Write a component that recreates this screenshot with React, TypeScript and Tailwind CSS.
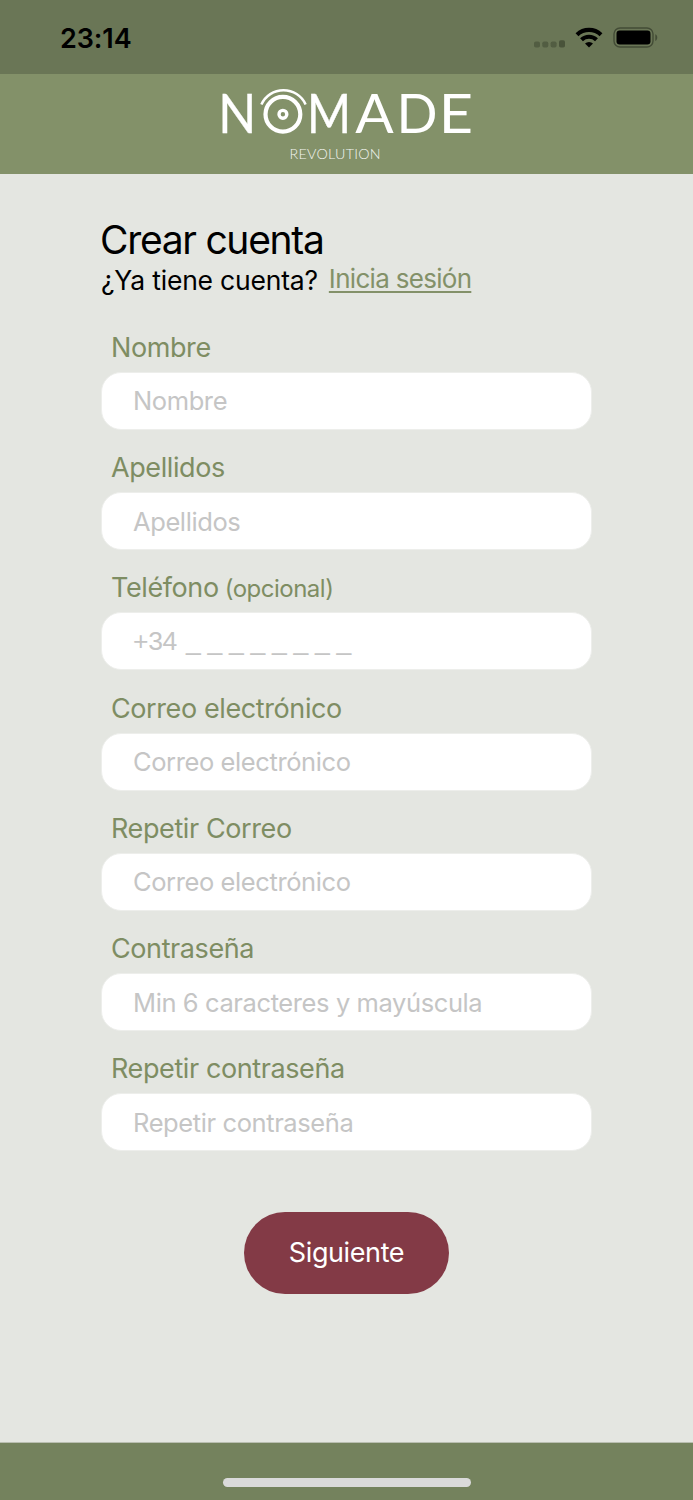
import { useState } from 'react'
import { clsx } from 'clsx'

// ============================================
// Types
// ============================================

interface FormField {
  id: string
  label: string
  /** Small note next to the label */
  hint?: string
  placeholder: string
  type?: string
}

const FIELDS: FormField[] = [
  { id: 'nombre', label: 'Nombre', placeholder: 'Nombre' },
  { id: 'apellidos', label: 'Apellidos', placeholder: 'Apellidos' },
  // Hair space separates the prefix from the digit slots
  { id: 'telefono', label: 'Teléfono', hint: '(opcional)', placeholder: '+34\u200a _ _ _ _ _ _ _ _', type: 'tel' },
  { id: 'correo', label: 'Correo electrónico', placeholder: 'Correo electrónico', type: 'email' },
  { id: 'correo2', label: 'Repetir Correo', placeholder: 'Correo electrónico', type: 'email' },
  { id: 'clave', label: 'Contraseña', placeholder: 'Min 6 caracteres y mayúscula', type: 'password' },
  { id: 'clave2', label: 'Repetir contraseña', placeholder: 'Repetir contraseña', type: 'password' },
]

// ============================================
// Status bar
// ============================================

function StatusBar() {
  return (
    <div className="flex h-[74px] items-center justify-between bg-[#6a7656] pr-[35px] pb-[1px] pl-[60px]">
      <span className="mt-[5px] text-[27px] leading-8 font-semibold tracking-[-0.1px] text-black">23:14</span>
      <svg width="126" height="24" viewBox="0 0 126 24" className="mt-1">
        {/* No signal */}
        <g fill="#525d42">
          <rect x="2" y="14.5" width="6" height="6" rx="1.8" />
          <rect x="10.3" y="14.5" width="6" height="6" rx="1.8" />
          <rect x="18.6" y="14.5" width="6" height="6" rx="1.8" />
          <rect x="27" y="13.2" width="6" height="7.3" rx="1.8" fill="#49533a" />
        </g>
        {/* Wifi */}
        <g fill="none" stroke="#000" strokeWidth="4.2">
          <path d="M45 7.7a17.6 17.6 0 0 1 24 0" />
          <path d="M49.5 12.7a11 11 0 0 1 15 0" />
        </g>
        <path d="M57 20.6l-4-4a5.8 5.8 0 0 1 8 0z" />
        {/* Battery */}
        <rect x="82" y="1" width="39" height="19" rx="6" fill="none" stroke="#434c36" strokeWidth="1.4" />
        <rect x="84.5" y="3.6" width="34" height="13.8" rx="3.2" />
        <path d="M123.3 7.2c2.6 1.2 2.6 5.4 0 6.8z" fill="#434c36" />
      </svg>
    </div>
  )
}

// ============================================
// Brand header
// ============================================

function BrandHeader() {
  return (
    <header className="flex h-[100px] justify-center bg-[#839169]">
      <svg width="290" height="99" viewBox="0 0 290 99" fill="#fff" className="font-[Lato,sans-serif]">
        <g fontSize="54">
          <text x="16.3" y="58.9" textLength="38" lengthAdjust="spacingAndGlyphs" stroke="#fff" strokeWidth="0.3">N</text>
          <text x="105" y="58.9" textLength="44" lengthAdjust="spacingAndGlyphs" stroke="#fff" strokeWidth="0.4">M</text>
          <text x="153.3" y="58.9" textLength="38.5" lengthAdjust="spacingAndGlyphs">A</text>
          <text x="194.5" y="58.9">D</text>
          <text x="236.7" y="58.9" textLength="34.3" lengthAdjust="spacingAndGlyphs">E</text>
        </g>
        <g fill="none" stroke="#fff">
          <circle cx="80.9" cy="40.3" r="17.4" strokeWidth="4.2" />
          <circle cx="80.9" cy="40.3" r="3.9" strokeWidth="3.4" />
          <path d="M59.4 30.6A24.2 24.2 0 0 1 103.6 30.4" strokeWidth="2.5" />
        </g>
        <text x="87.5" y="85.3" fontSize="14.3" fontWeight="300" textLength="91" opacity="0.9">REVOLUTION</text>
      </svg>
    </header>
  )
}

// ============================================
// Main Component
// ============================================

export default function App() {
  const [values, setValues] = useState<Record<string, string>>({})

  const handleChange = (id: string, value: string) => {
    setValues(prev => ({ ...prev, [id]: value }))
  }

  return (
    <div className="flex h-[1500px] w-[693px] flex-col bg-[#e4e6e1] font-[Inter,sans-serif]">
      <StatusBar />
      <BrandHeader />

      <main className="flex flex-1 flex-col px-[101px] pt-[42px]">
        <h1 className="-ml-px text-[39px] leading-[48px] tracking-[-1.3px] text-black">Crear cuenta</h1>
        <div className="flex h-[45.5px] items-start gap-[11px] text-[26.5px] leading-[32px]">
          <span className="tracking-[-0.2px] text-black">¿Ya tiene cuenta?</span>
          <a href="#" className="-mt-px text-[26px] tracking-[-0.7px] text-[#839169] underline decoration-2 underline-offset-[3px]">
            Inicia sesión
          </a>
        </div>

        <form className="flex flex-col">
          {FIELDS.map(field => (
            <div key={field.id} className="flex h-[120.25px] flex-col justify-end">
              <label htmlFor={field.id} className="h-[41px] pl-[10px] text-[27px] leading-[34px] tracking-[-0.4px] text-[#7e8d63]">
                {field.label}
                {field.hint && <span className="ml-[6px] text-[24px] tracking-[-0.5px]">{field.hint}</span>}
              </label>
              <input
                id={field.id}
                type={field.type ?? 'text'}
                placeholder={field.placeholder}
                value={values[field.id] ?? ''}
                onChange={e => handleChange(field.id, e.target.value)}
                className={clsx(
                  'h-[58px] rounded-[20px] border border-[#edeeeb] bg-white px-[31px] text-black outline-none placeholder:text-[#c5c5c5]',
                  field.type === 'tel'
                    ? "font-['Liberation_Sans',sans-serif] text-[26.5px] tracking-[-0.3px]"
                    : 'text-[25.5px] tracking-[-0.4px]'
                )}
              />
            </div>
          ))}
        </form>

        <button type="button" className="mx-auto mt-[61px] h-[82px] w-[205px] rounded-full bg-[#833a46] text-[27px] tracking-[-0.4px] text-white">
          Siguiente
        </button>
      </main>

      {/* Home indicator */}
      <footer className="flex h-[58px] justify-center border-t border-[#b9beb0] bg-[#74825d] pt-[35px]">
        <div className="h-[9px] w-[248px] rounded-full bg-[#dadada]" />
      </footer>
    </div>
  )
}
